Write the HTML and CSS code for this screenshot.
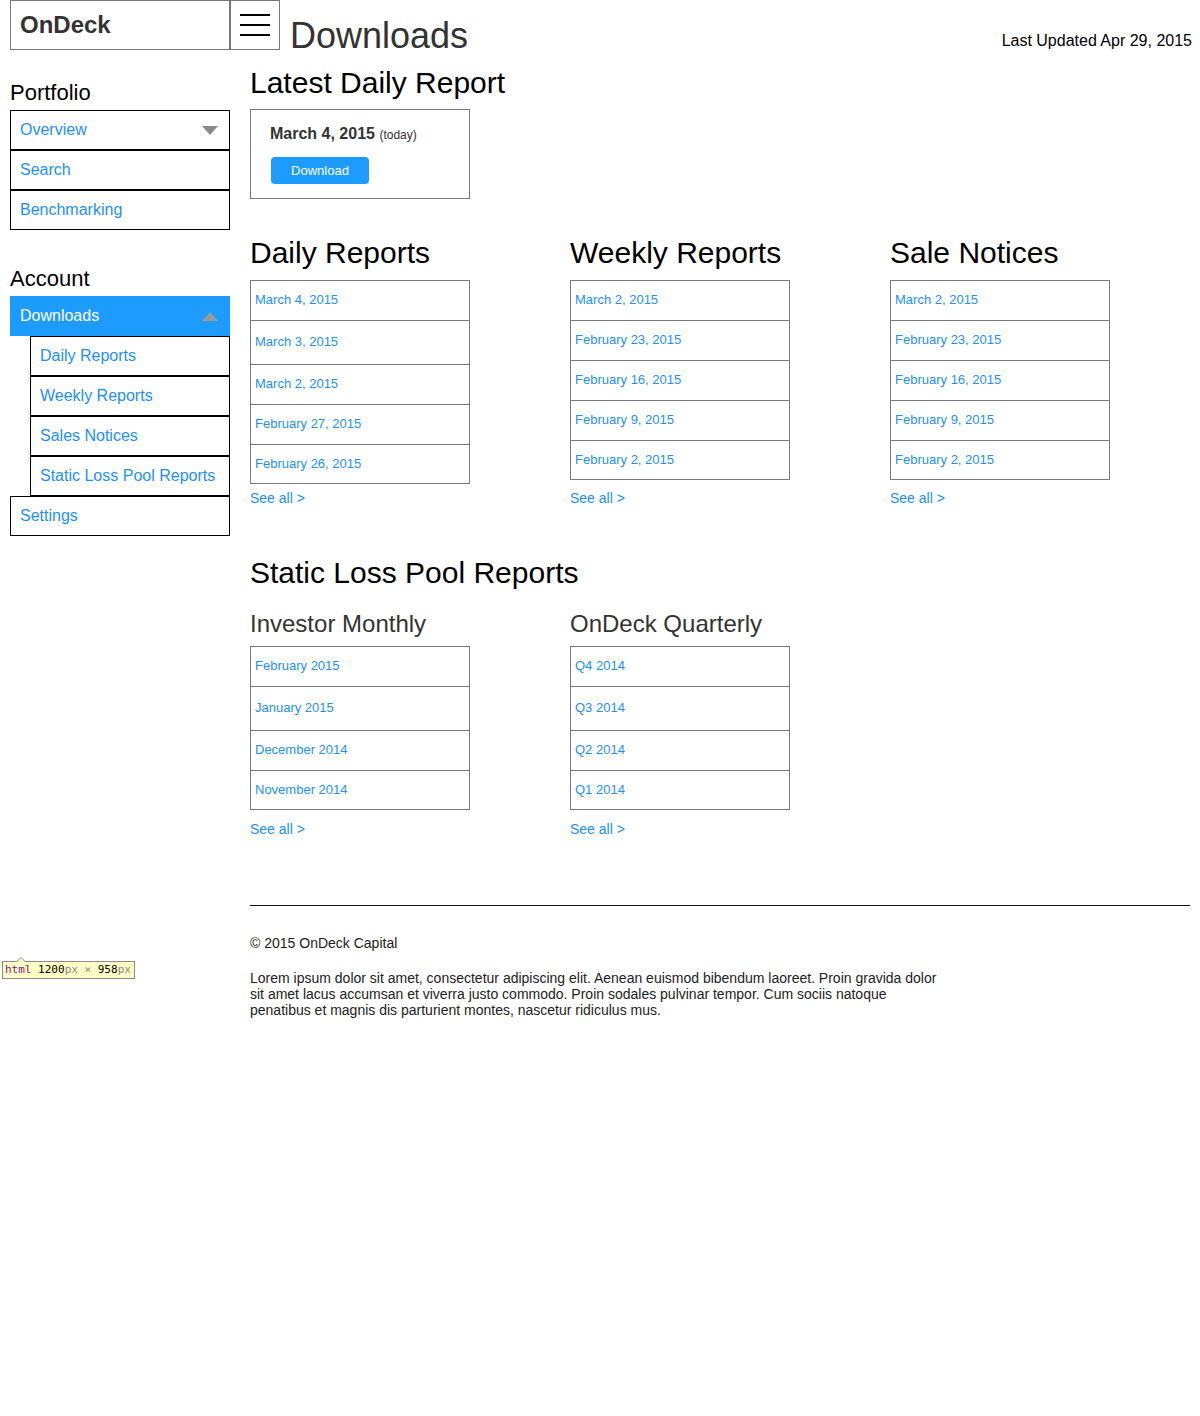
FILE: index.html
```html
<!DOCTYPE html>
<html lang="en">
<head>
<meta charset="utf-8">
<title>Downloads - OnDeck</title>
<link rel="stylesheet" href="styles.css">
</head>
<body>
<div class="page">
  <header class="header">
    <div class="logo">OnDeck</div>
    <div class="menu-btn">
      <svg width="30" height="22" viewBox="0 0 30 22" aria-hidden="true">
        <rect x="0" y="0" width="30" height="2" fill="#000"/>
        <rect x="0" y="10" width="30" height="2" fill="#000"/>
        <rect x="0" y="20" width="30" height="2" fill="#000"/>
      </svg>
    </div>
    <h1 class="page-title">Downloads</h1>
    <div class="updated">Last Updated Apr 29, 2015</div>
  </header>

  <div class="content">
    <aside class="sidebar">
      <h3 class="side-title">Portfolio</h3>
      <ul class="side-nav">
        <li class="nav-item"><a class="nav-link">Overview</a><span class="caret caret-down"></span></li>
        <li class="nav-item"><a class="nav-link">Search</a></li>
        <li class="nav-item"><a class="nav-link">Benchmarking</a></li>
      </ul>
      <h3 class="side-title side-title-account">Account</h3>
      <ul class="side-nav">
        <li class="nav-item nav-active"><a class="nav-link">Downloads</a><span class="caret caret-up"></span></li>
        <li class="nav-item nav-sub"><a class="nav-link">Daily Reports</a></li>
        <li class="nav-item nav-sub"><a class="nav-link">Weekly Reports</a></li>
        <li class="nav-item nav-sub"><a class="nav-link">Sales Notices</a></li>
        <li class="nav-item nav-sub"><a class="nav-link">Static Loss Pool Reports</a></li>
        <li class="nav-item"><a class="nav-link">Settings</a></li>
      </ul>
    </aside>

    <main class="main">
      <h2 class="h-latest">Latest Daily Report</h2>
      <div class="latest-card">
        <div class="latest-date">March 4, 2015 <span class="today">(today)</span></div>
        <a class="btn">Download</a>
      </div>

      <section class="reports">
        <div class="col">
          <h2 class="sec-title">Daily Reports</h2>
          <div class="list-wrap">
            <ul class="list">
              <li><a>March 4, 2015</a></li>
              <li class="tall"><a>March 3, 2015</a></li>
              <li><a>March 2, 2015</a></li>
              <li><a>February 27, 2015</a></li>
              <li><a>February 26, 2015</a></li>
            </ul>
          </div>
          <a class="see-all">See all &gt;</a>
        </div>
        <div class="col">
          <h2 class="sec-title">Weekly Reports</h2>
          <div class="list-wrap">
            <ul class="list">
              <li><a>March 2, 2015</a></li>
              <li><a>February 23, 2015</a></li>
              <li><a>February 16, 2015</a></li>
              <li><a>February 9, 2015</a></li>
              <li><a>February 2, 2015</a></li>
            </ul>
          </div>
          <a class="see-all">See all &gt;</a>
        </div>
        <div class="col">
          <h2 class="sec-title">Sale Notices</h2>
          <div class="list-wrap">
            <ul class="list">
              <li><a>March 2, 2015</a></li>
              <li><a>February 23, 2015</a></li>
              <li><a>February 16, 2015</a></li>
              <li><a>February 9, 2015</a></li>
              <li><a>February 2, 2015</a></li>
            </ul>
          </div>
          <a class="see-all">See all &gt;</a>
        </div>
      </section>

      <section class="static">
        <h2 class="static-title">Static Loss Pool Reports</h2>
        <div class="static-grid">
          <div class="col">
            <h3 class="sub-title">Investor Monthly</h3>
            <div class="list-wrap list-wrap-short">
              <ul class="list">
                <li><a>February 2015</a></li>
                <li class="tall"><a>January 2015</a></li>
                <li><a>December 2014</a></li>
                <li><a>November 2014</a></li>
              </ul>
            </div>
            <a class="see-all">See all &gt;</a>
          </div>
          <div class="col">
            <h3 class="sub-title">OnDeck Quarterly</h3>
            <div class="list-wrap list-wrap-short">
              <ul class="list">
                <li><a>Q4 2014</a></li>
                <li class="tall"><a>Q3 2014</a></li>
                <li><a>Q2 2014</a></li>
                <li><a>Q1 2014</a></li>
              </ul>
            </div>
            <a class="see-all">See all &gt;</a>
          </div>
        </div>
      </section>

      <footer class="footer">
        <p class="copyright">&copy; 2015 OnDeck Capital</p>
        <p class="lorem">Lorem ipsum dolor sit amet, consectetur adipiscing elit. Aenean euismod bibendum laoreet. Proin gravida dolor sit amet lacus accumsan et viverra justo commodo. Proin sodales pulvinar tempor. Cum sociis natoque penatibus et magnis dis parturient montes, nascetur ridiculus mus.</p>
      </footer>
    </main>
  </div>

  <div class="dev-tip"><span class="tag">html</span> 1200<span class="unit">px</span> <span class="unit">&times;</span> 958<span class="unit">px</span></div>
</div>
</body>
</html>
```

FILE: styles.css
```css
* { box-sizing: border-box; }

html, body {
  margin: 0;
  padding: 0;
  background: #fff;
}

body {
  font-family: "Liberation Sans", Arial, sans-serif;
  color: #000;
}

.page {
  position: relative;
  min-height: 1416px;
}

a { cursor: pointer; }

/* Header */
.header {
  display: flex;
  align-items: flex-end;
  height: 50px;
  padding-left: 10px;
}

.logo {
  align-self: stretch;
  width: 220px;
  border: 1px solid #777;
  display: flex;
  align-items: center;
  padding-left: 9px;
  font-size: 24px;
  font-weight: bold;
  color: #333;
}

.menu-btn {
  align-self: stretch;
  width: 50px;
  border: 1px solid #777;
  padding: 13px 0 0 9px;
}

.menu-btn svg { display: block; }

.page-title {
  margin: 0 0 0 10px;
  font-size: 36px;
  line-height: 29px;
  font-weight: normal;
  color: #333;
}

.updated {
  margin-left: auto;
  padding-right: 8px;
  font-size: 16px;
  line-height: 18px;
  color: #000;
}

/* Content */
.content {
  display: flex;
  gap: 20px;
  padding: 0 10px;
}

.sidebar {
  width: 220px;
  flex: none;
  padding-top: 30px;
}

.side-title {
  margin: 0 0 4px;
  font-size: 22px;
  line-height: 26px;
  font-weight: normal;
}

.side-title-account {
  margin-top: 36px;
  margin-bottom: 4px;
}

.side-nav {
  list-style: none;
  margin: 0;
  padding: 0;
}

.nav-item {
  display: flex;
  align-items: center;
  height: 40px;
  border: 1px solid #000;
  padding: 0 11px 0 9px;
  font-size: 16px;
}

.nav-link {
  color: #1e8fff;
}

.nav-sub {
  margin-left: 20px;
}

.nav-active {
  background: #1e9bff;
  border-color: #1e9bff;
}

.nav-active .nav-link {
  color: #fff;
}

.caret {
  margin-left: auto;
  width: 0;
  height: 0;
  border-left: 8px solid transparent;
  border-right: 8px solid transparent;
}

.caret-down {
  border-top: 9px solid #8a8a8a;
}

.caret-up {
  border-bottom: 9px solid #9a9a9a;
}

/* Main */
.main {
  flex: 1;
  min-width: 0;
}

.h-latest {
  margin: 16px 0 9px;
  font-size: 30px;
  line-height: 34px;
  font-weight: normal;
}

.latest-card {
  width: 220px;
  border: 1px solid #777;
  padding: 14px 19px 14px;
}

.latest-date {
  font-size: 16px;
  line-height: 20px;
  font-weight: bold;
  color: #333;
}

.today {
  font-size: 12px;
  font-weight: normal;
}

.btn {
  display: block;
  width: 98px;
  height: 27px;
  margin: 12px 0 0 1px;
  background: #1e9bff;
  border-radius: 4px;
  color: #fff;
  font-size: 13px;
  line-height: 27px;
  text-align: center;
}

.reports {
  margin-top: 37px;
  display: grid;
  grid-template-columns: repeat(3, 320px);
}

.sec-title {
  margin: 0 0 10px;
  font-size: 30px;
  line-height: 34px;
  font-weight: normal;
}

.list-wrap {
  height: 210px;
}

.list-wrap-short {
  height: 175px;
}

.list {
  width: 220px;
  list-style: none;
  margin: 0;
  padding: 0;
  border: 1px solid #777;
}

.list li {
  height: 40px;
  border-top: 1px solid #777;
  display: flex;
  align-items: center;
  padding: 0 0 2px 4px;
  font-size: 13px;
}

.list li:first-child {
  border-top: 0;
  height: 39px;
}

.list li:last-child {
  height: 39px;
}

.list li.tall {
  height: 44px;
}

.list a {
  color: #1e8fff;
}

.see-all {
  display: block;
  font-size: 14px;
  line-height: 16px;
  color: #1e8fff;
}

.static {
  margin-top: 50px;
}

.static-title {
  margin: 0 0 20px;
  font-size: 30px;
  line-height: 34px;
  font-weight: normal;
}

.static-grid {
  display: grid;
  grid-template-columns: repeat(2, 320px);
}

.sub-title {
  margin: 0 0 8px;
  font-size: 24px;
  line-height: 28px;
  font-weight: normal;
  color: #333;
}

/* Footer */
.footer {
  margin-top: 68px;
  border-top: 1px solid #111;
  padding-top: 29px;
  font-size: 14px;
  line-height: 16px;
  color: #222;
}

.copyright {
  margin: 0;
}

.lorem {
  margin: 19px 0 0;
  max-width: 700px;
}

/* Devtools size overlay */
.dev-tip {
  position: absolute;
  left: 2px;
  top: 961px;
  width: 133px;
  height: 18px;
  background: #ffffc6;
  border: 1px solid #8c8c8c;
  font-family: "DejaVu Sans Mono", "Liberation Mono", monospace;
  font-size: 11px;
  line-height: 16px;
  padding-left: 2px;
  color: #000;
  white-space: nowrap;
}

.dev-tip::before {
  content: "";
  position: absolute;
  left: 13px;
  top: -5px;
  border-left: 5px solid transparent;
  border-right: 5px solid transparent;
  border-bottom: 5px solid #8c8c8c;
}

.dev-tip::after {
  content: "";
  position: absolute;
  left: 14px;
  top: -4px;
  border-left: 4px solid transparent;
  border-right: 4px solid transparent;
  border-bottom: 4px solid #ffffc6;
}

.dev-tip .tag { color: #881280; }
.dev-tip .unit { color: #888; }
```
